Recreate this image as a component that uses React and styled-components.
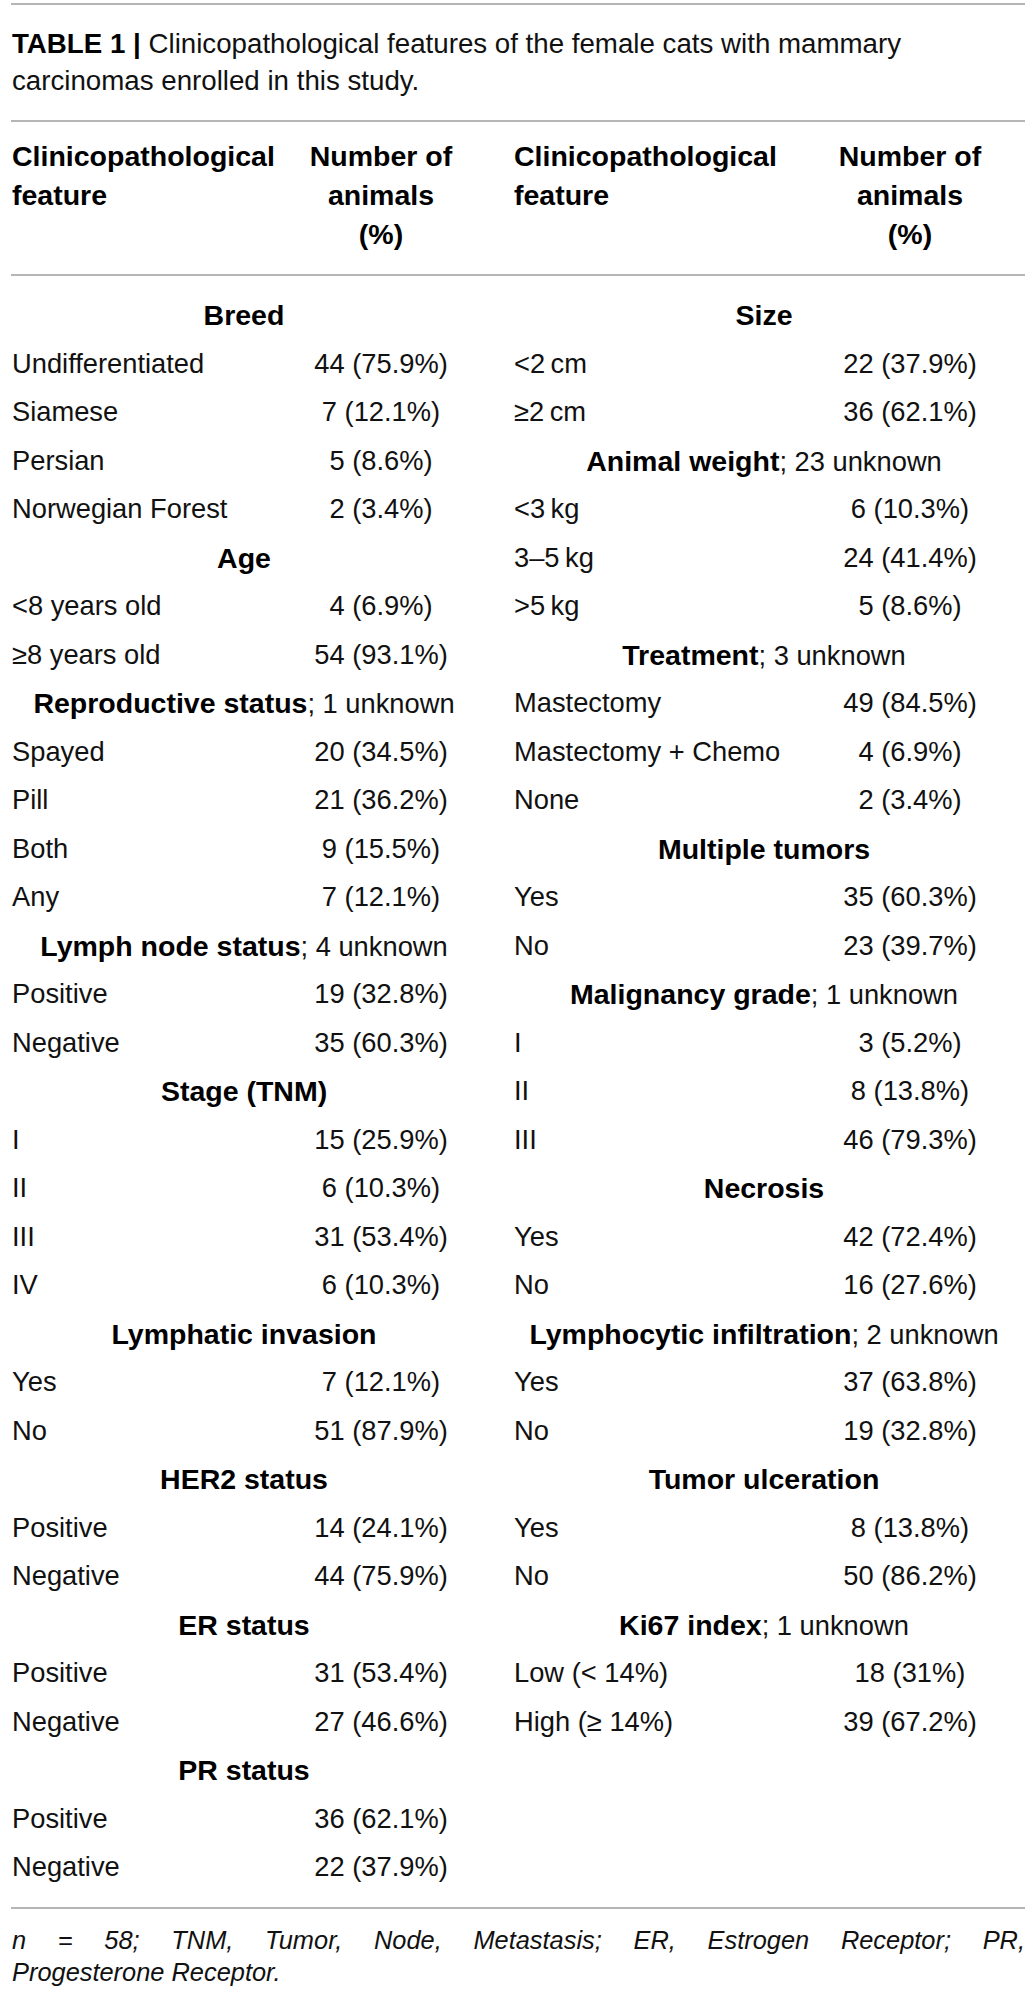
import React from 'react';
import styled, { createGlobalStyle } from 'styled-components';

const GlobalStyle = createGlobalStyle`
  html, body { margin: 0; padding: 0; background: #ffffff; }
  body { font-family: "Liberation Sans", Arial, Helvetica, sans-serif; color: #111111; }
`;

const Page = styled.div`
  margin: 0 7px 0 11px;
  padding-top: 3px;
`;

const Rule = styled.div`
  height: 2px;
  background: #b5b5b5;
`;

const Caption = styled.div`
  padding: 20px 0 21px 1px;
  font-size: 27.7px;
  line-height: 37px;
`;

const CaptionLabel = styled.span`
  font-weight: 700;
  color: #000;
  margin-right: 0.28em;
`;

const Columns = styled.div`
  display: grid;
  grid-template-columns: 466px 502px;
  column-gap: 36px;
  padding: ${p => p.$pad};
`;

const Half = styled.div`
  display: grid;
  grid-template-columns: ${p => p.$feat}px 1fr;
  grid-auto-rows: ${p => p.$rowH || 'auto'};
  align-content: start;
`;

const HeadCell = styled.div`
  font-weight: 700;
  font-size: 28.5px;
  line-height: 39px;
  color: #000;
  text-align: ${p => (p.$center ? 'center' : 'left')};
  padding-left: ${p => (p.$center ? 0 : 1)}px;
`;

const Cell = styled.div`
  font-size: 27.3px;
  line-height: 48.5px;
  white-space: nowrap;
  text-align: ${p => (p.$center ? 'center' : 'left')};
  padding-left: ${p => (p.$center ? 0 : 1)}px;
`;

const Section = styled.div`
  grid-column: 1 / -1;
  text-align: center;
  font-size: 27.3px;
  line-height: 48.5px;
  white-space: nowrap;
`;

const SectionName = styled.span`
  font-weight: 700;
  font-size: 28.5px;
  color: #000;
`;

const Footnote = styled.div`
  padding: 15px 0 0 1px;
  font-size: 25.4px;
  line-height: 32px;
  font-style: italic;
`;

const FootLine = styled.div`
  text-align: ${p => (p.$spread ? 'justify' : 'left')};
  text-align-last: ${p => (p.$spread ? 'justify' : 'auto')};
  white-space: nowrap;
`;

const T = '\u2009';

const left = [
  { name: 'Breed', rows: [['Undifferentiated', '44 (75.9%)'], ['Siamese', '7 (12.1%)'], ['Persian', '5 (8.6%)'], ['Norwegian Forest', '2 (3.4%)']] },
  { name: 'Age', rows: [['<8 years old', '4 (6.9%)'], ['≥8 years old', '54 (93.1%)']] },
  { name: 'Reproductive status', note: '; 1 unknown', rows: [['Spayed', '20 (34.5%)'], ['Pill', '21 (36.2%)'], ['Both', '9 (15.5%)'], ['Any', '7 (12.1%)']] },
  { name: 'Lymph node status', note: '; 4 unknown', rows: [['Positive', '19 (32.8%)'], ['Negative', '35 (60.3%)']] },
  { name: 'Stage (TNM)', rows: [['I', '15 (25.9%)'], ['II', '6 (10.3%)'], ['III', '31 (53.4%)'], ['IV', '6 (10.3%)']] },
  { name: 'Lymphatic invasion', rows: [['Yes', '7 (12.1%)'], ['No', '51 (87.9%)']] },
  { name: 'HER2 status', rows: [['Positive', '14 (24.1%)'], ['Negative', '44 (75.9%)']] },
  { name: 'ER status', rows: [['Positive', '31 (53.4%)'], ['Negative', '27 (46.6%)']] },
  { name: 'PR status', rows: [['Positive', '36 (62.1%)'], ['Negative', '22 (37.9%)']] },
];

const right = [
  { name: 'Size', rows: [[`<2${T}cm`, '22 (37.9%)'], [`≥2${T}cm`, '36 (62.1%)']] },
  { name: 'Animal weight', note: '; 23 unknown', rows: [[`<3${T}kg`, '6 (10.3%)'], [`3–5${T}kg`, '24 (41.4%)'], [`>5${T}kg`, '5 (8.6%)']] },
  { name: 'Treatment', note: '; 3 unknown', rows: [['Mastectomy', '49 (84.5%)'], ['Mastectomy + Chemo', '4 (6.9%)'], ['None', '2 (3.4%)']] },
  { name: 'Multiple tumors', rows: [['Yes', '35 (60.3%)'], ['No', '23 (39.7%)']] },
  { name: 'Malignancy grade', note: '; 1 unknown', rows: [['I', '3 (5.2%)'], ['II', '8 (13.8%)'], ['III', '46 (79.3%)']] },
  { name: 'Necrosis', rows: [['Yes', '42 (72.4%)'], ['No', '16 (27.6%)']] },
  { name: 'Lymphocytic infiltration', note: '; 2 unknown', rows: [['Yes', '37 (63.8%)'], ['No', '19 (32.8%)']] },
  { name: 'Tumor ulceration', rows: [['Yes', '8 (13.8%)'], ['No', '50 (86.2%)']] },
  { name: 'Ki67 index', note: '; 1 unknown', rows: [['Low (< 14%)', '18 (31%)'], ['High (≥ 14%)', '39 (67.2%)']] },
];

function Head({ feat }) {
  return (
    <Half $feat={feat}>
      <HeadCell>Clinicopathological<br />feature</HeadCell>
      <HeadCell $center>Number of<br />animals<br />(%)</HeadCell>
    </Half>
  );
}

function Body({ feat, sections }) {
  return (
    <Half $feat={feat} $rowH="48.5px">
      {sections.map(s => (
        <React.Fragment key={s.name}>
          <Section>
            <SectionName>{s.name}</SectionName>
            {s.note}
          </Section>
          {s.rows.map(([f, n], i) => (
            <React.Fragment key={i}>
              <Cell>{f}</Cell>
              <Cell $center>{n}</Cell>
            </React.Fragment>
          ))}
        </React.Fragment>
      ))}
    </Half>
  );
}

export default function App() {
  return (
    <>
      <GlobalStyle />
      <Page>
        <Rule />
        <Caption>
          <CaptionLabel>TABLE 1 |</CaptionLabel>Clinicopathological features of the female cats with mammary
          <br />
          carcinomas enrolled in this study.
        </Caption>
        <Rule />
        <Columns $pad="15px 0 20px">
          <Head feat={274} />
          <Head feat={292} />
        </Columns>
        <Rule />
        <Columns $pad="15px 0 15px">
          <Body feat={274} sections={left} />
          <Body feat={292} sections={right} />
        </Columns>
        <Rule />
        <Footnote>
          <FootLine $spread>n = 58; TNM, Tumor, Node, Metastasis; ER, Estrogen Receptor; PR,</FootLine>
          <FootLine>Progesterone Receptor.</FootLine>
        </Footnote>
      </Page>
    </>
  );
}
